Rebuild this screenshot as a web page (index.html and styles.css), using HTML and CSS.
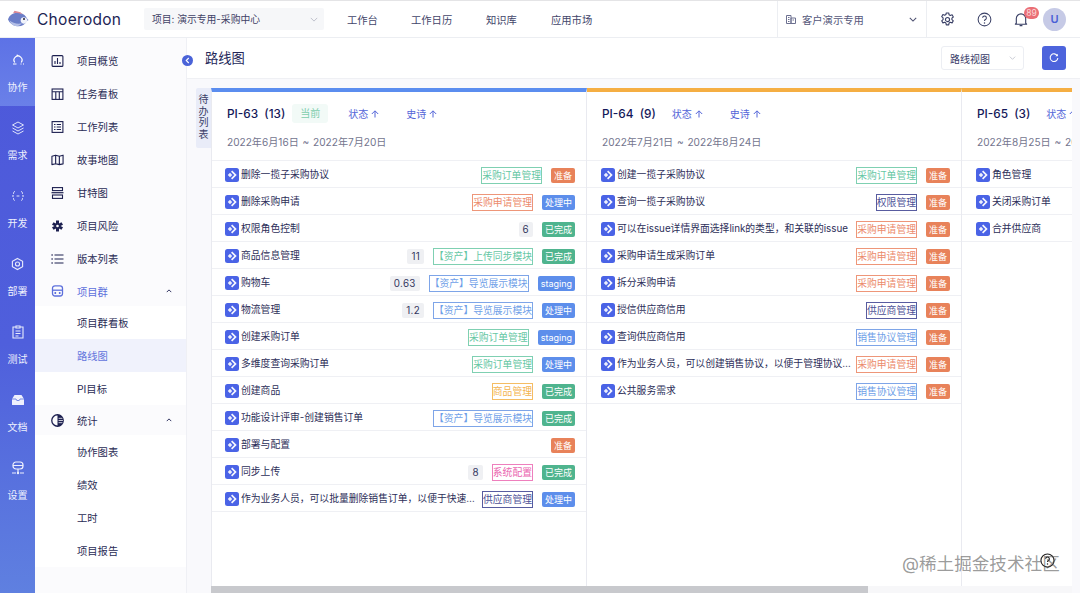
FILE: index.html
```html
<!DOCTYPE html>
<html lang="zh">
<head>
<meta charset="utf-8">
<title>路线图</title>
<link rel="stylesheet" href="styles.css">
</head>
<body>
<svg class="defs" width="0" height="0">
  <symbol id="issue" viewBox="0 0 14 14">
    <rect width="14" height="14" rx="2.500" fill="#4a63e6"/>
    <path d="M7.200 2.500L11.700 7l-4.500 4.500L6 10.300 9.300 7 6 3.700z" fill="#fff" opacity=".95"/>
    <path d="M5 4.800L7.200 7 5 9.200 2.800 7z" fill="#fff" opacity=".9"/>
  </symbol>
  <symbol id="up" viewBox="0 0 8 8">
    <path d="M4 7.500V1M.8 4L4 .8 7.200 4" fill="none" stroke="#5365d8" stroke-width="1"/>
  </symbol>
</svg>

<header class="topbar">
  <div class="brand">
    <svg class="fish" viewBox="0 0 22 18" width="22" height="18"><path d="M1 9.500C2.500 4 8 1.800 13 3c3.500.8 6 3 7 5.500l1.500 1.500-1.800 1.200C18 15 13.500 17 9 16 5.500 15.300 2.500 13 1 9.500z" fill="#6b7ec8"/><path d="M2.500 10.500c3 2.500 8 4 12.500 2.800-2 2.300-4.500 3.200-7 2.700-2.500-.4-4.500-2.900-5.500-5.500z" fill="#b4bfe6"/><path d="M6 3.300L7.500.8l6 1.400 2 2.300C12 3 9 2.800 6 3.300z" fill="#d98a96"/><path d="M14.500 8c2-1.500 4.500-.8 5.800 1.600.5 1-.5 3-2.300 3.900-2 .5-4-.5-4.300-2.500-.1-1.100.1-2.200.8-3z" fill="#f1f3fa"/><circle cx="17" cy="9" r="1" fill="#223"/></svg>
    <span class="brand-name">Choerodon</span>
  </div>
  <div class="project-select">
    <span>项目: 演示专用-采购中心</span>
    <svg class="chev" viewBox="0 0 10 6" width="8" height="5"><path d="M1 1l4 4 4-4" fill="none" stroke="#b8bac6" stroke-width="1.100"/></svg>
  </div>
  <nav class="topnav">
    <a class="nav-a">工作台</a>
    <a class="nav-b">工作日历</a>
    <a class="nav-c">知识库</a>
    <a class="nav-d">应用市场</a>
  </nav>
  <div class="org">
    <svg viewBox="0 0 10 9" width="10" height="9"><path d="M.5 .5h4.500v8H.5zM5 3h4.500v5.500H5zM2 2.500h1.500M2 4.500h1.500M2 6.500h1.500M6.500 5h1.500" fill="none" stroke="#6c7090" stroke-width="1"/></svg>
    <span class="org-name">客户演示专用</span>
    <svg viewBox="0 0 10 6" width="8" height="5"><path d="M1 1l4 4 4-4" fill="none" stroke="#4d5070" stroke-width="1.300"/></svg>
  </div>
  <div class="tools">
    <svg viewBox="0 0 16 16" width="15" height="15"><path d="M6.700 1h2.600l.4 2 1.300.7 1.900-.7 1.300 2.300-1.500 1.300v1.500l1.500 1.300-1.300 2.200-1.900-.6-1.300.7-.4 2H6.700l-.4-2-1.300-.7-1.900.6-1.300-2.200 1.500-1.300V6.300L1.800 5l1.300-2.300 1.900.7 1.300-.7z" fill="none" stroke="#3a4066" stroke-width="1.200" stroke-linejoin="round"/><circle cx="8" cy="8" r="2.200" fill="none" stroke="#3a4066" stroke-width="1.200"/></svg>
    <svg viewBox="0 0 16 16" width="15" height="15"><circle cx="8" cy="8" r="6.800" fill="none" stroke="#3a4066" stroke-width="1.100"/><path d="M6 6.200a2 2 0 1 1 3 1.800c-.7.400-1 .8-1 1.600" fill="none" stroke="#3a4066" stroke-width="1.100"/><circle cx="8" cy="11.600" r=".8" fill="#3a4066"/></svg>
    <span class="bell">
      <svg viewBox="0 0 14 16" width="14" height="15"><path d="M2 12V7a5 5 0 0 1 10 0v5l1 1H1zM5.500 14.500h3" fill="none" stroke="#3a4066" stroke-width="1.200" stroke-linejoin="round"/></svg>
      <b class="badge">89</b>
    </span>
    <span class="avatar">U</span>
  </div>
</header>

<div class="body">
  <aside class="rail">
    <a class="rail-item active">
      <svg viewBox="0 0 14 14" width="14" height="14"><path d="M3.800 9.500a4 4 0 1 1 6.400 0M2 11h3.500M9.500 11h1M12 11h1" fill="none" stroke="#fff" stroke-width="1.200"/><path d="M5.800 1.200l2 1.200-2 1.200z" fill="#fff"/></svg>
      <span>协作</span>
    </a>
    <a class="rail-item">
      <svg viewBox="0 0 14 14" width="14" height="14"><path d="M7 1l5.500 3L7 7 1.500 4zM1.500 7L7 10l5.500-3M1.500 10L7 13l5.500-3" fill="none" stroke="#dfe4fb" stroke-width="1" stroke-linejoin="round"/></svg>
      <span>需求</span>
    </a>
    <a class="rail-item">
      <svg viewBox="0 0 14 14" width="14" height="14"><path d="M4 2.500C2.600 2.500 2.500 4 2.500 5.300S2 7 1.500 7c.5 0 1 .4 1 1.700s.1 2.800 1.500 2.800M10 2.500c1.400 0 1.500 1.500 1.500 2.800s.5 1.700 1 1.700c-.5 0-1 .4-1 1.700s-.1 2.800-1.500 2.800M5.600 7h2.800" fill="none" stroke="#e4e8fc" stroke-width="1" stroke-dasharray="3 1"/></svg>
      <span>开发</span>
    </a>
    <a class="rail-item">
      <svg viewBox="0 0 14 14" width="13" height="13"><path d="M7 1l5.500 3v6L7 13l-5.500-3V4z" fill="none" stroke="#e8ebfc" stroke-width="1.200"/><circle cx="7" cy="7" r="2.200" fill="none" stroke="#e8ebfc" stroke-width="1.200"/></svg>
      <span>部署</span>
    </a>
    <a class="rail-item">
      <svg viewBox="0 0 12 14" width="12" height="14"><path d="M4 2H1v11h10V2H8M4 1h4v2H4zM3.500 6h5M3.500 8.500h5M3.500 11h3" fill="none" stroke="#e8ebfc" stroke-width="1.100"/></svg>
      <span>测试</span>
    </a>
    <a class="rail-item">
      <svg viewBox="0 0 14 12" width="14" height="12"><path d="M3.500 1h7L13 5v5.500a.5.500 0 0 1-.5.500h-11a.5.500 0 0 1-.5-.500V5z" fill="#eef0fd"/><path d="M1 5h4l.8 1.500h2.400L9 5h4" fill="none" stroke="#5a72df" stroke-width=".8"/></svg>
      <span>文档</span>
    </a>
    <a class="rail-item">
      <svg viewBox="0 0 14 14" width="14" height="14"><rect x="2" y="1" width="10" height="7" rx="3" fill="none" stroke="#eef0fd" stroke-width="1.200"/><path d="M2 4.500h10M7 8v3M1 12h4M9 12h4" fill="none" stroke="#eef0fd" stroke-width="1.200"/><circle cx="7" cy="12" r="1.200" fill="#eef0fd"/></svg>
      <span>设置</span>
    </a>
  </aside>

  <aside class="sidebar">
    <a class="menu-item"><svg viewBox="0 0 12 12" width="12" height="12"><rect x=".6" y=".6" width="10.800" height="10.800" rx="1" fill="none" stroke="#1d2050" stroke-width="1.100"/><path d="M3.500 9V6M6 9V3M8.500 9V7" stroke="#1d2050" stroke-width="1.100"/></svg><span>项目概览</span></a>
    <a class="menu-item"><svg viewBox="0 0 12 12" width="12" height="12"><rect x=".6" y="1" width="10.800" height="10.400" fill="none" stroke="#1d2050" stroke-width="1.100"/><path d="M.6 3.800h10.800M4.300 3.800v7.600M7.800 3.800v7.600" stroke="#1d2050" stroke-width="1.100"/></svg><span>任务看板</span></a>
    <a class="menu-item"><svg viewBox="0 0 12 12" width="12" height="12"><rect x=".6" y=".6" width="10.800" height="10.800" fill="none" stroke="#1d2050" stroke-width="1.100"/><path d="M2.500 3.500h1.500M5.200 3.500h4.300M2.500 6h1.500M5.200 6h4.300M2.500 8.500h1.500M5.200 8.500h4.300" stroke="#1d2050" stroke-width="1.100"/></svg><span>工作列表</span></a>
    <a class="menu-item"><svg viewBox="0 0 14 12" width="13" height="12"><path d="M1 2l4-1.200 4 1.200 4-1.200v9.400L9 11 5 10l-4 1zM5 1v9M9 2v9" fill="none" stroke="#1d2050" stroke-width="1.200" stroke-linejoin="round"/></svg><span>故事地图</span></a>
    <a class="menu-item"><svg viewBox="0 0 12 12" width="12" height="12"><path d="M0 5.700h12" stroke="#1d2050" stroke-width="1.200"/><rect x="1" y=".6" width="10" height="3" fill="none" stroke="#1d2050" stroke-width="1.100"/><rect x="1" y="8" width="10" height="3.400" fill="none" stroke="#1d2050" stroke-width="1.100"/></svg><span>甘特图</span></a>
    <a class="menu-item"><svg viewBox="0 0 12 12" width="12" height="12"><path d="M4.500 .5h3v3l2.500-1.200 1.500 2.500L9 6l2.500 1.200L10 9.700 7.500 8.500v3h-3v-3L2 9.700.5 7.200 3 6 .5 4.800 2 2.300l2.500 1.200z" fill="#1d2050"/><circle cx="6" cy="6" r="1.300" fill="#fff"/></svg><span>项目风险</span></a>
    <a class="menu-item"><svg viewBox="0 0 12 10" width="12" height="10"><path d="M3 1h9M3 5h9M3 9h9" stroke="#1d2050" stroke-width="1.100"/><path d="M0 1h1.200M0 5h1.200M0 9h1.200" stroke="#1d2050" stroke-width="1.300"/></svg><span>版本列表</span></a>

    <a class="menu-head current"><svg viewBox="0 0 12 12" width="12" height="12"><rect x="1" y=".8" width="10" height="10.200" rx="2.500" fill="none" stroke="#5d70dc" stroke-width="1.300"/><path d="M1 5.200h10" stroke="#5d70dc" stroke-width="1.300"/><rect x="3" y="7" width="1.600" height="2" fill="#5d70dc"/><rect x="7.400" y="7" width="1.600" height="2" fill="#5d70dc"/></svg><span>项目群</span><svg class="caret" viewBox="0 0 8 5" width="6" height="4"><path d="M1 4l3-3 3 3" fill="none" stroke="#1d2050" stroke-width="1.200"/></svg></a>
    <a class="sub-item">项目群看板</a>
    <a class="sub-item selected">路线图</a>
    <a class="sub-item">PI目标</a>

    <a class="menu-head"><svg viewBox="0 0 12 12" width="13" height="13"><circle cx="6" cy="6" r="5.300" fill="none" stroke="#1d2050" stroke-width="1.200"/><path d="M6 .7a5.300 5.300 0 0 1 0 10.600z" fill="#1d2050"/><path d="M7 4h3.500M7 6h4M7 8h3.500" stroke="#fff" stroke-width=".7"/></svg><span>统计</span><svg class="caret" viewBox="0 0 8 5" width="6" height="4"><path d="M1 4l3-3 3 3" fill="none" stroke="#1d2050" stroke-width="1.200"/></svg></a>
    <a class="sub-item">协作图表</a>
    <a class="sub-item">绩效</a>
    <a class="sub-item">工时</a>
    <a class="sub-item">项目报告</a>
    <div class="sidebar-rest"></div>
  </aside>

  <main class="main">
    <button class="collapse" type="button"><svg viewBox="0 0 6 8" width="5" height="7"><path d="M4.500 1L1.500 4l3 3" fill="none" stroke="#fff" stroke-width="1.300"/></svg></button>
    <div class="page-head">
      <h1>路线图</h1>
      <div class="view-select"><span>路线视图</span><svg viewBox="0 0 10 6" width="7" height="4"><path d="M1 1l4 4 4-4" fill="none" stroke="#b8bac6" stroke-width="1.100"/></svg></div>
      <button class="refresh" type="button"><svg viewBox="0 0 12 12" width="10" height="10"><path d="M10 3.300A4.600 4.600 0 1 0 10.600 6" fill="none" stroke="#fff" stroke-width="1.300"/><path d="M7.600 3.800h3V.9z" fill="#fff"/></svg></button>
    </div>
    <div class="content">
      <div class="backlog">待办列表</div>
      <div class="board-wrap">
        <div class="board">
          <section class="col col-blue">
            <div class="col-head">
              <div class="col-title"><strong>PI-63&nbsp;&nbsp;(13)</strong><span class="now">当前</span><a class="filter f1">状态<svg class="up"><use href="#up"/></svg></a><a class="filter f2">史诗<svg class="up"><use href="#up"/></svg></a></div>
              <div class="col-date">2022年6月16日 ~ 2022年7月20日</div>
            </div>
            <div class="row"><svg class="ico"><use href="#issue"/></svg><span class="name">删除一揽子采购协议</span><span class="tag green">采购订单管理</span><span class="st orange">准备</span></div>
            <div class="row"><svg class="ico"><use href="#issue"/></svg><span class="name">删除采购申请</span><span class="tag red">采购申请管理</span><span class="st blue">处理中</span></div>
            <div class="row"><svg class="ico"><use href="#issue"/></svg><span class="name">权限角色控制</span><span class="count">6</span><span class="st teal">已完成</span></div>
            <div class="row"><svg class="ico"><use href="#issue"/></svg><span class="name">商品信息管理</span><span class="count">11</span><span class="tag green">【资产】上传同步模块</span><span class="st teal">已完成</span></div>
            <div class="row"><svg class="ico"><use href="#issue"/></svg><span class="name">购物车</span><span class="count">0.63</span><span class="tag sky">【资产】导览展示模块</span><span class="st blue">staging</span></div>
            <div class="row"><svg class="ico"><use href="#issue"/></svg><span class="name">物流管理</span><span class="count">1.2</span><span class="tag sky">【资产】导览展示模块</span><span class="st blue">处理中</span></div>
            <div class="row"><svg class="ico"><use href="#issue"/></svg><span class="name">创建采购订单</span><span class="tag green">采购订单管理</span><span class="st blue">staging</span></div>
            <div class="row"><svg class="ico"><use href="#issue"/></svg><span class="name">多维度查询采购订单</span><span class="tag green">采购订单管理</span><span class="st blue">处理中</span></div>
            <div class="row"><svg class="ico"><use href="#issue"/></svg><span class="name">创建商品</span><span class="tag amber">商品管理</span><span class="st teal">已完成</span></div>
            <div class="row"><svg class="ico"><use href="#issue"/></svg><span class="name">功能设计评审-创建销售订单</span><span class="tag sky">【资产】导览展示模块</span><span class="st teal">已完成</span></div>
            <div class="row"><svg class="ico"><use href="#issue"/></svg><span class="name">部署与配置</span><span class="st orange">准备</span></div>
            <div class="row"><svg class="ico"><use href="#issue"/></svg><span class="name">同步上传</span><span class="count">8</span><span class="tag pink">系统配置</span><span class="st teal">已完成</span></div>
            <div class="row"><svg class="ico"><use href="#issue"/></svg><span class="name">作为业务人员，可以批量删除销售订单，以便于快速处理销售订单</span><span class="tag navy">供应商管理</span><span class="st blue">处理中</span></div>
          </section>

          <section class="col col-amber">
            <div class="col-head">
              <div class="col-title"><strong>PI-64&nbsp;&nbsp;(9)</strong><a class="filter f3">状态<svg class="up"><use href="#up"/></svg></a><a class="filter f2">史诗<svg class="up"><use href="#up"/></svg></a></div>
              <div class="col-date">2022年7月21日 ~ 2022年8月24日</div>
            </div>
            <div class="row"><svg class="ico"><use href="#issue"/></svg><span class="name">创建一揽子采购协议</span><span class="tag green">采购订单管理</span><span class="st orange">准备</span></div>
            <div class="row"><svg class="ico"><use href="#issue"/></svg><span class="name">查询一揽子采购协议</span><span class="tag navy">权限管理</span><span class="st orange">准备</span></div>
            <div class="row"><svg class="ico"><use href="#issue"/></svg><span class="name">可以在issue详情界面选择link的类型，和关联的issue</span><span class="tag red">采购申请管理</span><span class="st orange">准备</span></div>
            <div class="row"><svg class="ico"><use href="#issue"/></svg><span class="name">采购申请生成采购订单</span><span class="tag red">采购申请管理</span><span class="st orange">准备</span></div>
            <div class="row"><svg class="ico"><use href="#issue"/></svg><span class="name">拆分采购申请</span><span class="tag red">采购申请管理</span><span class="st orange">准备</span></div>
            <div class="row"><svg class="ico"><use href="#issue"/></svg><span class="name">授信供应商信用</span><span class="tag navy">供应商管理</span><span class="st orange">准备</span></div>
            <div class="row"><svg class="ico"><use href="#issue"/></svg><span class="name">查询供应商信用</span><span class="tag sky">销售协议管理</span><span class="st orange">准备</span></div>
            <div class="row"><svg class="ico"><use href="#issue"/></svg><span class="name">作为业务人员，可以创建销售协议，以便于管理协议内容和状态</span><span class="tag red">采购申请管理</span><span class="st orange">准备</span></div>
            <div class="row"><svg class="ico"><use href="#issue"/></svg><span class="name">公共服务需求</span><span class="tag sky">销售协议管理</span><span class="st orange">准备</span></div>
          </section>

          <section class="col col-amber">
            <div class="col-head">
              <div class="col-title"><strong>PI-65&nbsp;&nbsp;(3)</strong><a class="filter f3">状态<svg class="up"><use href="#up"/></svg></a></div>
              <div class="col-date">2022年8月25日 ~ 2022年9月28日</div>
            </div>
            <div class="row"><svg class="ico"><use href="#issue"/></svg><span class="name">角色管理</span></div>
            <div class="row"><svg class="ico"><use href="#issue"/></svg><span class="name">关闭采购订单</span></div>
            <div class="row"><svg class="ico"><use href="#issue"/></svg><span class="name">合并供应商</span></div>
          </section>
        </div>
        <div class="scrollbar"><div class="thumb"></div></div>
      </div>
    </div>
  </main>
</div>

<div class="help"><svg viewBox="0 0 16 16" width="15" height="15"><circle cx="8" cy="8" r="7" fill="none" stroke="#222" stroke-width="1.200"/><path d="M6 6.200a2 2 0 1 1 3 1.800c-.7.400-1 .8-1 1.600" fill="none" stroke="#222" stroke-width="1.200"/><circle cx="8" cy="11.700" r=".8" fill="#222"/></svg></div>
<div class="watermark">@稀土掘金技术社区</div>
</body>
</html>
```

FILE: styles.css
```css
* { box-sizing: border-box; }
html, body { margin: 0; height: 100%; overflow: hidden; }
body {
  font-family: Inter, "Noto Sans CJK SC", "Noto Sans", sans-serif;
  font-size: 10px;
  color: #2c2e58;
  background: #fff;
  display: flex;
  flex-direction: column;
  position: relative;
}
a { color: inherit; text-decoration: none; }
button { border: 0; padding: 0; cursor: pointer; }
.defs { position: absolute; }

.topbar {
  height: 38px;
  flex: none;
  display: flex;
  align-items: center;
  border-top: 1px solid #e4e4e6;
  border-bottom: 1px solid #eceef2;
  background: #fff;
  position: relative;
  z-index: 2;
}
.brand { width: 144px; padding-left: 7px; display: flex; align-items: center; gap: 8px; flex: none; }
.brand-name { font-size: 15.500px; color: #1d2454; letter-spacing: .3px; }
.project-select {
  width: 180px; height: 22px; flex: none;
  background: #f6f7f9; border-radius: 2px;
  display: flex; align-items: center; justify-content: space-between;
  padding: 0 6px 0 8px; color: #3f4266;
  font-size: 9.800px;
}
.topnav { width: 453px; flex: none; display: flex; padding-left: 23px; font-size: 10.300px; color: #42456a; }
.nav-a { width: 64px; }
.nav-b { width: 75px; }
.nav-c { width: 65px; }
.org {
  width: 150px; height: 37px; flex: none;
  display: flex; align-items: center;
  padding: 0 9px 0 8px;
  border-left: 1px solid #eceef2; border-right: 1px solid #eceef2;
  color: #54577a;
}
.org-name { margin-left: 6px; flex: 1; font-size: 10.300px; }
.tools { flex: 1; display: flex; align-items: center; padding-left: 13px; gap: 22px; }
.bell { display: flex; position: relative; }
.badge {
  position: absolute; left: 10px; top: -5px;
  width: 15px; height: 12px; border-radius: 6px;
  background: #ea6e75; color: #fbd9da;
  font-size: 8.500px; font-weight: 400; line-height: 12px; text-align: center;
}
.avatar {
  width: 23px; height: 23px; border-radius: 50%; margin-left: -7px;
  background: #c6cae6; color: #4a5fd6;
  font-size: 11px; font-weight: 600; line-height: 23px; text-align: center;
}

.body { flex: 1; display: flex; min-height: 0; }

.rail {
  width: 35px; flex: none;
  background: linear-gradient(180deg, #4d58da 0%, #4f5fdc 55%, #5f80e0 100%);
  color: #fff; font-size: 10px;
  display: flex; flex-direction: column;
}
.rail-item {
  height: 68px; flex: none;
  display: flex; flex-direction: column; align-items: center;
  padding-top: 15px;
}
.rail-item svg { height: 14px; }
.rail-item span { margin-top: 13px; line-height: 14px; color: #eef0fd; }
.rail-item.active { background: linear-gradient(180deg, #5d72e6, #6a80e8); }

.sidebar {
  width: 152px; flex: none;
  background: #fbfbfd;
  border-right: 1px solid #eff0f5;
  display: flex; flex-direction: column;
  padding-top: 6px;
  color: #2a2c55;
  font-size: 10.300px;
}
.menu-item, .menu-head {
  display: flex; align-items: center;
  padding-left: 16px;
  flex: none;
}
.menu-item { height: 33px; }
.menu-item:nth-child(7) { margin-bottom: 1px; }
.menu-head { height: 30px; }
.menu-item svg, .menu-head > svg:first-child { width: 13px; flex: none; margin-right: 13px; }
.menu-head > span { flex: 1; }
.caret { margin-right: 14px; }
.current { color: #5d70dc; }
.sub-item {
  height: 33px; flex: none;
  display: flex; align-items: center;
  padding-left: 42px;
  background: #fff;
}
.sub-item.selected { background: #f0f2fc; color: #6375dc; }
.sidebar-rest { flex: 1; }

.main { flex: 1; min-width: 0; display: flex; flex-direction: column; position: relative; background: #fff; }
.collapse {
  position: absolute; left: -5px; top: 17px;
  width: 11px; height: 11px; border-radius: 50%;
  background: #4a63d8;
  display: flex; align-items: center; justify-content: center;
}
.page-head {
  height: 41px; flex: none;
  display: flex; align-items: center;
  padding-right: 14px; padding-left: 18px;
  border-bottom: 1px solid #eff0f4;
}
.page-head h1 { margin: -2px 0 0; flex: 1; font-size: 13.300px; font-weight: 400; color: #25285a; }
.view-select {
  width: 83px; height: 24px;
  border: 1px solid #eceef3; border-radius: 3px;
  display: flex; align-items: center; justify-content: space-between;
  padding: 0 7px 0 8px; color: #383b68;
}
.refresh {
  width: 24px; height: 24px; margin-left: 18px;
  background: #4d64dc; border-radius: 3px;
  display: flex; align-items: center; justify-content: center;
}

.content {
  flex: 1; min-height: 0;
  display: flex;
  background: #f9f9fc;
  padding: 9px 8px 0 9px;
}
.backlog {
  width: 15px; height: 60px; flex: none;
  background: #e9ecf8;
  padding: 6px 2px 0;
  line-height: 11.500px;
  text-align: center;
  color: #3b3e66;
  border-radius: 2px 0 0 2px;
}
.board-wrap { flex: 1; min-width: 0; display: flex; flex-direction: column; }
.board { flex: 1; min-height: 0; display: flex; overflow: hidden; }
.col {
  width: 375px; flex: none;
  background: #fff;
  border-top: 4px solid #5b8def;
  border-right: 1px solid #e9eaf0;
}
.col-blue { width: 376px; border-left: 1px solid #e9eaf0; }
.col-amber { border-top-color: #f5ae43; }
.col-head { height: 69px; padding: 12px 0 0 15px; border-bottom: 1px solid #eff0f4; }
.col-title { display: flex; align-items: center; height: 19px; white-space: nowrap; }
.col-title strong { font-size: 11.800px; font-weight: 500; color: #14185a; }
.now {
  width: 36px; height: 19px; margin-left: 7px;
  background: #f2faf7; color: #7ccdad; border-radius: 3px;
  text-align: center; line-height: 19px;
}
.filter { color: #5365d8; display: inline-flex; align-items: center; gap: 3px; }
.up { width: 8px; height: 8px; flex: none; }
.f1 { margin-left: 20px; }
.f2 { margin-left: 27px; }
.f3 { margin-left: 16px; }
.col-date { margin-top: 10px; color: #73758e; font-size: 10.100px; line-height: 18px; word-spacing: 1px; }

.row {
  height: 27px;
  display: flex; align-items: center;
  padding: 0 11px 0 14px;
  border-bottom: 1px solid #eff0f4;
  font-size: 9.800px;
}
.col-blue .row { padding-left: 13px; }
.ico { width: 14px; height: 14px; flex: none; margin: 1px 2px 0 0; }
.name {
  flex: 1; min-width: 0; margin-right: 5px;
  white-space: nowrap; overflow: hidden; text-overflow: ellipsis;
  color: #2c2e58;
}
.count {
  height: 15px; padding: 0 4px; margin-right: 9px;
  background: #eff0f3; border-radius: 2px;
  line-height: 15px; color: #33365e; letter-spacing: .3px; flex: none;
  margin-top: 2px;
}
.tag {
  height: 17px; padding: 0; margin-right: 9px;
  border: 1px solid; line-height: 16px; flex: none; white-space: nowrap;
  margin-top: 3px; background: #fff;
}
.tag.green { color: #66c7a4; border-color: #7fd0b2; }
.tag.red { color: #ec8a6c; border-color: #ee9679; }
.tag.sky { color: #6f9fe8; border-color: #7ea5e8; }
.tag.amber { color: #f3b34e; border-color: #f5bd63; }
.tag.pink { color: #ea66b0; border-color: #ee7fbd; }
.tag.navy { color: #4c5096; border-color: #585ca0; }
.st {
  height: 15px; padding: 0 3px; flex: none;
  border-radius: 2px; color: #fff; line-height: 15px;
  margin-top: 2px; font-size: 9px;
}
.st.orange { background: #e8825a; }
.st.blue { background: #5d8eeb; }
.st.teal { background: #4fb48e; }

.scrollbar { height: 7px; flex: none; background: #f7f7f9; }
.thumb { width: 657px; height: 7px; background: #c8c9cd; }

.help {
  position: absolute; left: 1030px; top: 543px;
  width: 34px; height: 34px; border-radius: 50%;
  background: radial-gradient(circle, #fff 50%, rgba(255,255,255,0) 72%);
  display: flex; align-items: center; justify-content: center;
}
.watermark {
  position: absolute; left: 902px; top: 552px;
  font-size: 17.600px; line-height: 24px; color: rgba(70,70,70,.55);
  white-space: nowrap;
}
```
